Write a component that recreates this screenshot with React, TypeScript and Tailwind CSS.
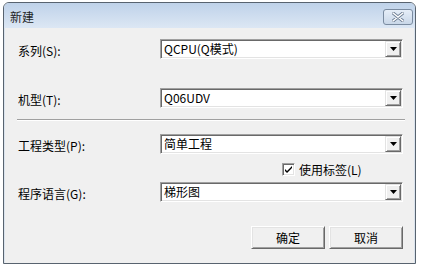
import React from "react";

function Arrow() {
  return (
    <svg width="7" height="4" viewBox="0 0 7 4">
      <path d="M0 0H7L3.5 4Z" fill="#000" />
    </svg>
  );
}

function Combo({ value }: { value: string }) {
  return (
    <div className="w-[243px] h-[20px] bg-white border-t border-l border-[#a0a0a0] border-r border-b border-r-white border-b-white shadow-[inset_1px_1px_0_#696969,inset_-1px_-1px_0_#e3e3e3] flex items-center justify-between">
      <span className="pl-[3px] text-[12px] leading-none text-black">{value}</span>
      <div className="w-[16px] h-[16px] mr-[1px] bg-[#f0f0f0] border-t border-l border-t-[#e3e3e3] border-l-[#e3e3e3] border-r border-b border-r-[#696969] border-b-[#696969] shadow-[inset_1px_1px_0_#ffffff,inset_-1px_-1px_0_#a0a0a0] flex items-center justify-center">
        <Arrow />
      </div>
    </div>
  );
}

function Row({ label, value }: { label: string; value: string }) {
  return (
    <div className="flex items-center h-[20px]">
      <span className="w-[142px] pt-[4px] text-[12px] leading-none text-black">{label}</span>
      <Combo value={value} />
    </div>
  );
}

function Button({ children }: { children: React.ReactNode }) {
  return (
    <div className="w-[74px] h-[23px] bg-[#f0f0f0] border-t border-l border-t-white border-l-white border-r border-b border-r-[#696969] border-b-[#696969] shadow-[inset_1px_1px_0_#e3e3e3,inset_-1px_-1px_0_#a0a0a0] flex items-center justify-center text-[12px] leading-none text-black">
      {children}
    </div>
  );
}

export default function App() {
  return (
    <div className="w-[424px] h-[266px] bg-white pt-[2px] pl-[3px] font-['Microsoft_YaHei','Noto_Sans_CJK_SC',sans-serif]">
      <div className="w-[413px] h-[262px] flex flex-col border border-[#58636f] rounded-t-[6px] overflow-hidden bg-[#f0f0f0]">
        <div className="h-[25px] shrink-0 flex items-center justify-between bg-gradient-to-b from-[#bfd2e9] to-[#dce7f4] pl-[6px] pr-[2px]">
          <span className="text-[12px] leading-none text-[#1f1f1f] pt-[2px]">新建</span>
          <div className="w-[30px] h-[16px] mt-[3px] rounded-[3px] border border-[#7a8ba0] bg-gradient-to-b from-[#e6eef8] to-[#c9d7e8] flex items-center justify-center">
            <svg width="12" height="10" viewBox="0 0 12 10">
              <path d="M1 1L11 9M11 1L1 9" stroke="#6b7c92" strokeWidth="3.2" strokeLinecap="round" />
              <path d="M1 1L11 9M11 1L1 9" stroke="#ffffff" strokeWidth="1.6" strokeLinecap="round" />
            </svg>
          </div>
        </div>
        <div className="flex-1 flex flex-col pl-[13px] pt-[11px] border-l border-r border-[#dbe4ee]">
          <Row label="系列(S):" value="QCPU(Q模式)" />
          <div className="mt-[29px]">
            <Row label="机型(T):" value="Q06UDV" />
          </div>
          <div className="mt-[11px] -ml-[1px] w-[388px] h-[2px] border-t border-[#a0a0a0] border-b border-b-white" />
          <div className="mt-[13px]">
            <Row label="工程类型(P):" value="简单工程" />
          </div>
          <div className="mt-[8px] h-[14px] flex items-center pl-[264px]">
            <div className="w-[13px] h-[13px] bg-white border-t border-l border-[#a0a0a0] border-r border-b border-r-white border-b-white shadow-[inset_1px_1px_0_#696969,inset_-1px_-1px_0_#e3e3e3] flex items-center justify-center">
              <svg width="7" height="7" viewBox="0 0 7 7">
                <path d="M0 3L0 5L2 7L7 2L7 0L2 5Z" fill="#000" />
              </svg>
            </div>
            <span className="ml-[4px] text-[12px] leading-none text-black pt-[1px]">使用标签(L)</span>
          </div>
          <div className="mt-[6px]">
            <Row label="程序语言(G):" value="梯形图" />
          </div>
          <div className="mt-[24px] w-[385px] flex justify-end gap-[4px]">
            <Button>确定</Button>
            <Button>取消</Button>
          </div>
        </div>
      </div>
    </div>
  );
}
